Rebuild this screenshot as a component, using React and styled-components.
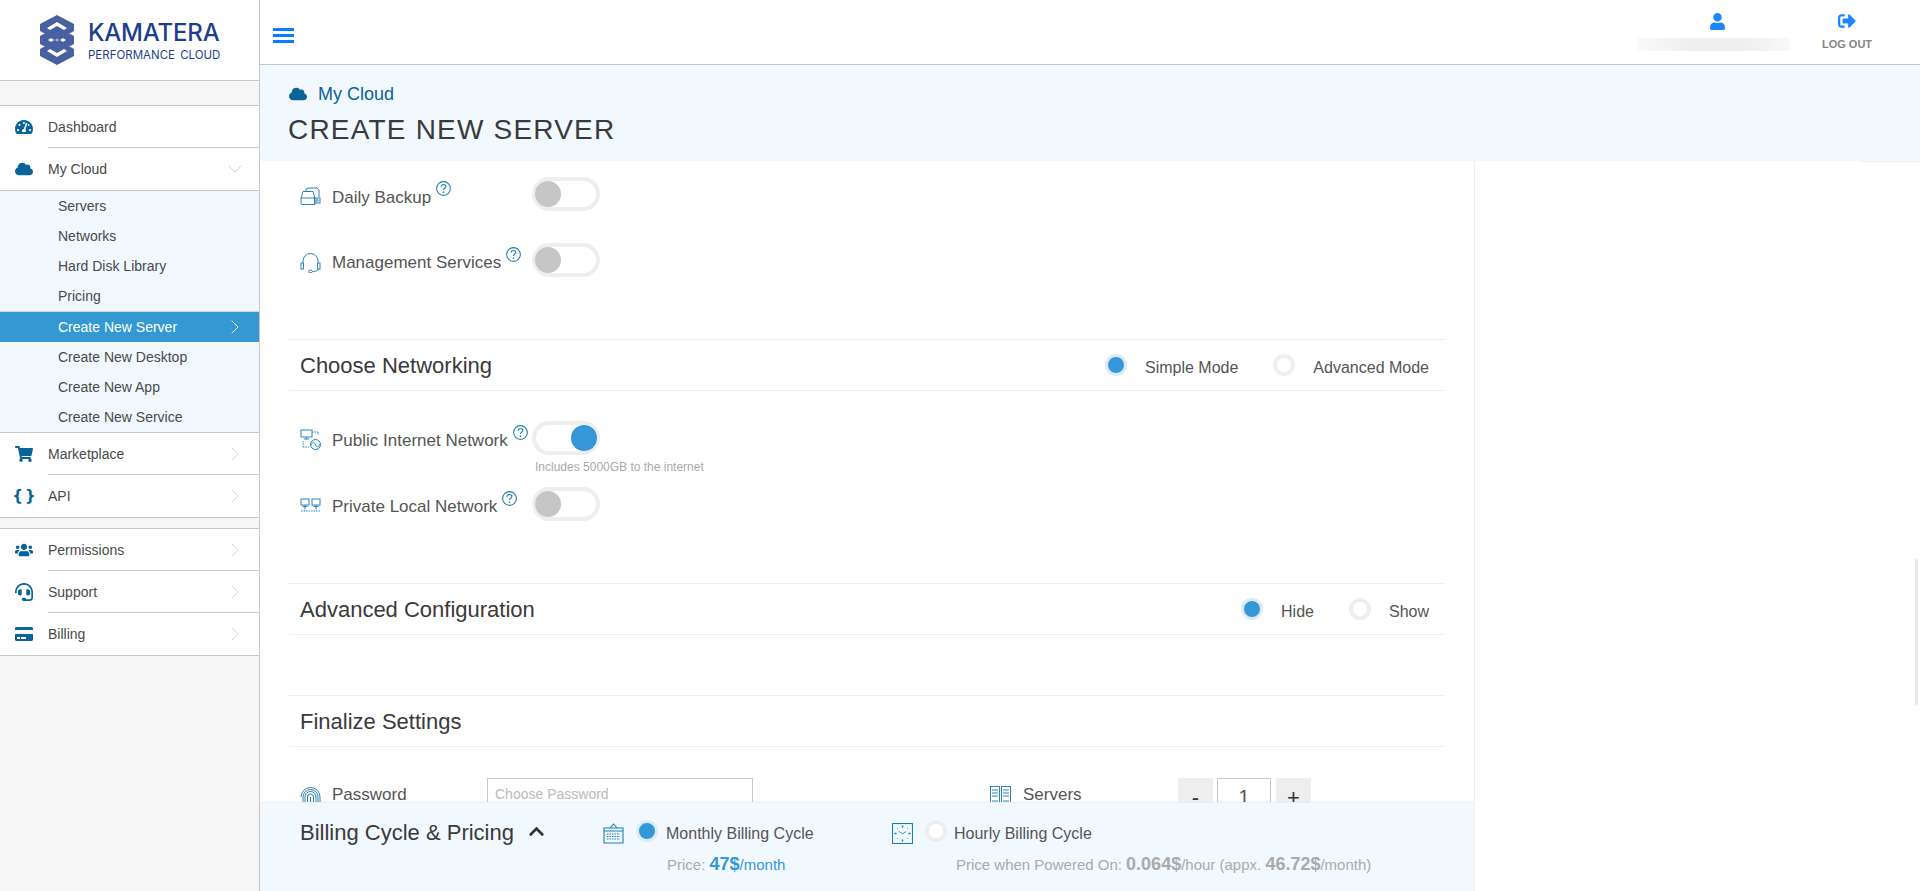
import React from "react";
import styled, { createGlobalStyle } from "styled-components";
import { FaTachometerAlt, FaCloud, FaShoppingCart, FaUsers, FaHeadset, FaCreditCard, FaUser, FaSignOutAlt, FaChevronUp } from "react-icons/fa";
import { FiChevronRight, FiChevronDown } from "react-icons/fi";

const Global = createGlobalStyle`
  html, body { margin: 0; height: 100%; overflow: hidden; }
  body { font-family: "Liberation Sans", Arial, sans-serif; color: #333; background: #fff; }
  * { box-sizing: border-box; }
`;

const Page = styled.div`
  position: relative;
  display: grid;
  grid-template-columns: 260px 1fr;
  height: 891px;
  overflow: hidden;
`;

const Sidebar = styled.aside`
  background: #f6f6f6;
  border-right: 1px solid #c8c8c8;
  height: 100%;
`;
const LogoBox = styled.div`
  height: 81px;
  background: #fff;
  border-bottom: 1px solid #c8c8c8;
  padding: 15px 0 0 40px;
  display: flex;
  gap: 14px;
`;
const LogoText = styled.div`
  color: #1d3f8f;
  font-family: "Inter", "Liberation Sans", sans-serif;
  display: flex;
  flex-direction: column;
  width: 134px;
`;
const LogoName = styled.div`
  font-size: 24px;
  font-weight: 500;
  line-height: 26px;
  margin-top: 5px;
  letter-spacing: -0.2px;
  white-space: nowrap;
`;
const LogoSub = styled.div`
  font-size: 11.5px;
  line-height: 13px;
  margin-top: 3px;
  letter-spacing: 0;
  word-spacing: 2px;
  white-space: nowrap;
  font-weight: 400;
`;
const Strip = styled.div`
  height: ${(p) => p.$h}px;
  border-bottom: 1px solid #c8c8c8;
`;
const NavGroup = styled.nav`
  background: #fff;
`;
const NavItem = styled.div`
  position: relative;
  display: flex;
  align-items: center;
  height: ${(p) => p.$h || 42}px;
  padding: 0 0 ${(p) => (p.$h ? 2 : 0)}px 15px;
  font-size: 14px;
  color: #4a4a4a;
  &::after {
    content: "";
    position: absolute;
    bottom: 0;
    right: 0;
    left: ${(p) => (p.$full ? 0 : 48)}px;
    height: 1px;
    background: #c8c8c8;
  }
`;
const NavIcon = styled.span`
  width: 18px;
  margin-right: 15px;
  color: #0a6399;
  display: flex;
  justify-content: center;
  align-items: center;
  font-size: 18px;
`;
const Braces = styled(NavIcon)`
  font-family: "DejaVu Sans", sans-serif;
  font-weight: 700;
  font-size: 15px;
  word-spacing: -3px;
  white-space: nowrap;
`;
const Caret = styled.span`
  margin-left: auto;
  margin-right: 12px;
  color: ${(p) => (p.$light ? "#fff" : "#c9c9c9")};
  display: flex;
  font-size: 24px;
  svg { stroke-width: ${(p) => (p.$light ? 1 : 0.8)}; }
`;
const Sub = styled.div`
  background: #f0f8fe;
  border-bottom: 1px solid #c8c8c8;
  height: 242px;
`;
const SubItem = styled.div`
  display: flex;
  align-items: center;
  height: ${(p) => (p.$active ? 31 : 30)}px;
  padding-left: 58px;
  font-size: 14px;
  color: ${(p) => (p.$active ? "#fff" : "#4a4a4a")};
  background: ${(p) => (p.$active ? "#3498d3" : "transparent")};
  border-top: ${(p) => (p.$active ? "1px solid #c8dbe6" : "0")};
`;

const Main = styled.main`
  position: relative;
  min-width: 0;
  display: flex;
  flex-direction: column;
  height: 891px;
`;
const Header = styled.header`
  height: 65px;
  flex: none;
  border-bottom: 1px solid #c8c8c8;
  display: flex;
  align-items: flex-start;
  padding: 0 43px 0 13px;
`;
const Burger = styled.div`
  margin-top: 28px;
  width: 21px;
  height: 15px;
  display: flex;
  flex-direction: column;
  justify-content: space-between;
  span { height: 3px; background: #0a7cff; display: block; }
`;
const UserBox = styled.div`
  margin-left: auto;
  width: 153px;
  display: flex;
  flex-direction: column;
  align-items: center;
  padding-top: 13px;
  color: #1b87ff;
  font-size: 17px;
  svg { margin-left: 8px; }
`;
const Blurred = styled.div`
  width: 153px;
  height: 13px;
  margin-top: 8px;
  background: linear-gradient(90deg, #fafafa, #efefef 35%, #efefef 70%, #f9f9f9);
`;
const LogoutBox = styled.div`
  width: 60px;
  margin-left: 27px;
  display: flex;
  flex-direction: column;
  align-items: center;
  padding-top: 12px;
  color: #1b87ff;
  font-size: 18px;
`;
const LogoutText = styled.div`
  margin-top: 8px;
  font-size: 11px;
  line-height: 13px;
  font-weight: 700;
  color: #858585;
  white-space: nowrap;
`;
const TitleBand = styled.div`
  height: 96px;
  flex: none;
  background: #f1f8fe;
  padding: 18px 0 0 28px;
`;
const Crumb = styled.div`
  display: flex;
  align-items: center;
  color: #0a6399;
  font-size: 18px;
  line-height: 22px;
  gap: 11px;
  padding-left: 1px;
`;
const PageTitle = styled.h1`
  margin: 9px 0 0;
  font-size: 28px;
  line-height: 32px;
  font-weight: 400;
  letter-spacing: 1.2px;
  color: #3a3a3a;
`;
const Body = styled.div`
  flex: 1;
  min-height: 0;
  width: 1215px;
  border-right: 1px solid #eee;
  overflow: hidden;
  padding: 16px 30px 0 29px;
`;
const Row = styled.div`
  display: flex;
  align-items: flex-start;
  height: 34px;
  padding-left: 11px;
  margin-bottom: ${(p) => p.$mb || 0}px;
`;
const LabelArea = styled.div`
  width: 232px;
  height: 34px;
  display: flex;
  align-items: center;
`;
const LineIcon = styled.svg`
  width: 21px;
  height: 21px;
  flex: none;
  margin-right: ${(p) => p.$mr || 11}px;
  fill: none;
  stroke: #2a82b5;
  stroke-width: 1;
  margin-top: ${(p) => p.$mt || 5}px;
`;
const RowLabel = styled.span`
  font-size: 17px;
  color: #555;
  margin-top: ${(p) => p.$mt || 5}px;
  white-space: nowrap;
`;
const Help = styled.svg`
  width: 15px;
  height: 15px;
  flex: none;
  margin: -12px 0 0 5px;
`;
const Toggle = styled.div`
  width: 68px;
  height: 34px;
  border: 4px solid #eee;
  border-radius: 17px;
  background: #fff;
  flex: none;
  display: flex;
  align-items: center;
  justify-content: ${(p) => (p.$on ? "flex-end" : "flex-start")};
  &::before {
    content: "";
    width: 26px;
    height: 26px;
    margin: 0 -1px;
    border-radius: 50%;
    background: ${(p) => (p.$on ? "#3498d8" : "#c6c6c6")};
  }
`;
const Hint = styled.div`
  height: 32px;
  padding: 5px 0 0 246px;
  font-size: 12px;
  line-height: 14px;
  color: #aaa;
`;
const SectionHead = styled.div`
  display: flex;
  align-items: center;
  height: 52px;
  border-top: 1px solid #eee;
  border-bottom: 1px solid #eee;
  padding: 0 15px 0 11px;
  margin-top: ${(p) => p.$mt || 0}px;
  margin-bottom: ${(p) => p.$mb || 0}px;
`;
const SectionTitle = styled.h2`
  margin: 2px 0 0;
  font-size: 22px;
  font-weight: 400;
  color: #3a3a3a;
  white-space: nowrap;
`;
const Radios = styled.div`
  margin-left: auto;
  display: flex;
  align-items: center;
  gap: 35px;
`;
const RadioOption = styled.label`
  display: flex;
  align-items: center;
  gap: 18px;
  font-size: 16px;
  color: #555;
  span { margin-top: 6px; }
`;
const Radio = styled.i`
  display: block;
  flex: none;
  width: 22px;
  height: 22px;
  border-radius: 50%;
  border: ${(p) => (p.$on ? "3px solid #dbeaf3" : "4px solid #eee")};
  background: ${(p) => (p.$on ? "#3498d8" : "#fff")};
`;
const FormRow = styled.div`
  display: grid;
  grid-template-columns: 690px 1fr;
  padding: 1px 0 0 11px;
`;
const FormCell = styled.div`
  display: flex;
  align-items: flex-start;
`;
const FormLabel = styled.span`
  font-size: 17px;
  color: #555;
  width: 155px;
  margin-top: 7px;
`;
const PassInput = styled.div`
  width: 266px;
  height: 40px;
  border: 1px solid #c8c8c8;
  padding: 7px 7px;
  font-size: 14px;
  color: #bbb;
`;
const Step = styled.div`
  width: 35px;
  height: 40px;
  background: #eee;
  text-align: center;
  font-size: 22px;
  line-height: 40px;
  color: #333;
`;
const StepValue = styled.div`
  width: 54px;
  height: 40px;
  margin: 0 5px 0 4px;
  border: 1px solid #c8c8c8;
  text-align: center;
  font-size: 20px;
  line-height: 36px;
  color: #555;
`;
const Billing = styled.footer`
  position: absolute;
  left: 0;
  bottom: 0;
  width: 1214px;
  height: 89px;
  background: #f1f8fe;
  border-top: 1px solid #e8eef2;
  display: flex;
  padding-left: 40px;
`;
const BillingTitle = styled.div`
  width: 303px;
  display: flex;
  align-items: center;
  gap: 14px;
  height: 60px;
  font-size: 22px;
  color: #3a3a3a;
  svg { font-size: 17px; color: #333; margin-top: -4px; }
`;
const Cycle = styled.div`
  width: ${(p) => p.$w}px;
  flex: none;
  padding-top: 17px;
`;
const CycleTop = styled.div`
  display: flex;
  align-items: flex-start;
  font-size: 16px;
  color: #555;
`;
const CycleIcon = styled.svg`
  width: 21px;
  height: 21px;
  margin: 3px 12px 0 0;
  flex: none;
  fill: none;
  stroke: #1e7fb5;
  stroke-width: 1.1;
`;
const CycleLabel = styled.span`
  margin: 5px 0 0 ${(p) => p.$ml}px;
  white-space: nowrap;
`;
const PriceLine = styled.div`
  margin: 10px 0 0 ${(p) => p.$ml}px;
  font-size: 15px;
  line-height: 20px;
  color: ${(p) => (p.$muted ? "#aaa" : "#3498d8")};
  white-space: nowrap;
  b { font-size: 18px; }
`;
const Muted = styled.span` color: #aaa; `;
const ScrollThumb = styled.div`
  position: absolute;
  right: 2px;
  top: 559px;
  width: 3px;
  height: 146px;
  background: #e8e8e8;
  border-radius: 2px;
`;
const CornerLine = styled.div`
  position: absolute;
  right: 0;
  top: 161px;
  width: 60px;
  height: 1px;
  background: #eee;
`;

const LogoMark = () => (
  <svg width="34" height="50" viewBox="0 0 34 50">
    <g fill="#1f3f8c" opacity=".82">
      <path d="M17 0 34 9v7L17 25 0 16V9z" />
      <path d="M17 12 34 21v8L17 38 0 29v-8z" />
      <path d="M17 25 34 34v7L17 50 0 41v-7z" />
    </g>
    <path fill="#fff" d="M17 7l10 6-3 2-7-4-7 4-3-2zM7 36l3-2 7 4 7-4 3 2-10 6zM8 25l3-2 3 2-3 2zM20 25l3-2 3 2-3 2z" />
    <path fill="#fff" opacity=".5" d="M14.500 25l2.500-1.500 2.500 1.500-2.500 1.500z" />
  </svg>
);
const HelpIcon = () => (
  <Help viewBox="0 0 14 14">
    <circle cx="7" cy="7" r="6.400" fill="none" stroke="#1e7fb0" strokeWidth="1" />
    <path d="M4.800 5.400c0-1.400 1.100-2.200 2.200-2.200s2.200.8 2.200 2c0 1.600-2.200 1.600-2.200 3.300" fill="none" stroke="#1e7fb0" strokeWidth="1" />
    <circle cx="7" cy="10.400" r=".75" fill="#1e7fb0" />
  </Help>
);
const DiskIcon = () => (
  <LineIcon viewBox="0 0 21 21">
    <path d="M1 12 3 5.500h10l2 6.500v6.500H2a1 1 0 0 1-1-1zM1 12h14" />
    <path d="M6 5.500V3l2-1h9l2 2v7" />
    <rect x="14.500" y="12" width="5.500" height="5" />
    <circle cx="17.200" cy="14.500" r="1" />
  </LineIcon>
);
const HeadsetIcon = () => (
  <LineIcon viewBox="0 0 21 21">
    <path d="M3 11V9a7.500 7.500 0 0 1 15 0v2M18.500 17c0 1.500-3 2.500-6 2.500" />
    <rect x="1" y="11" width="2.500" height="6" />
    <rect x="17.500" y="11" width="2.500" height="6" />
    <ellipse cx="10.500" cy="19.500" rx="2" ry="1.300" />
  </LineIcon>
);
const PublicNetIcon = () => (
  <LineIcon viewBox="0 0 21 21" $mt={3}>
    <rect x="1" y="1" width="11" height="7" />
    <path d="M4 10h5M6.500 8v2" />
    <path d="M12 3h6M18 3v3M3 12v6M3 18h6" strokeDasharray="1.500 1" />
    <circle cx="15.500" cy="15.500" r="5" />
    <path d="M11 16c2-4 3-3 4.500 0s3 2 4.500-1" />
  </LineIcon>
);
const LocalNetIcon = () => (
  <LineIcon viewBox="0 0 21 21" $mt={9}>
    <rect x="1" y="1" width="8" height="6" />
    <rect x="12" y="1" width="8" height="6" />
    <path d="M2.500 8.500h5M13.500 8.500h5M5 7v3M16 7v3" />
    <path d="M1 13h19M5 10v3M16 10v3" strokeDasharray="1.500 1" />
  </LineIcon>
);
const FingerprintIcon = () => (
  <LineIcon viewBox="0 0 21 21" $mt={8}>
    <path d="M1 11a9.500 9.500 0 0 1 19 0v5M3 17v-6a7.500 7.500 0 0 1 15 0v7M5 19v-8a5.500 5.500 0 0 1 11 0v9M7.500 20v-9a3 3 0 0 1 6 0v9M10.500 11v9" />
  </LineIcon>
);
const RackIcon = () => (
  <LineIcon viewBox="0 0 21 21" $mt={8} $mr={12}>
    <rect x=".5" y=".5" width="9" height="20" />
    <rect x="11.500" y=".5" width="9" height="20" />
    <path d="M2 4h6M2 7h6M2 10h6M13 4h6M13 7h6M13 10h6M2 15h6M13 15h6" />
  </LineIcon>
);
const CalendarIcon = () => (
  <CycleIcon viewBox="0 0 21 21">
    <path d="M1 5h19v15H1zM1 8h19M7 5l3.500-4L14 5" />
    <path d="M4 11h13M4 13.500h13M4 16h13" strokeDasharray="1.500 1" />
  </CycleIcon>
);
const ClockIcon = () => (
  <CycleIcon viewBox="0 0 21 21">
    <rect x=".5" y=".5" width="20" height="20" />
    <path d="M10.500 2.500v2M10.500 16.500v2M2.500 10.500h2M16.500 10.500h2" strokeWidth="1.500" />
    <path d="M5 5l.8.8M15.200 15.200l.8.800M16 5l-.8.8M5 16l.8-.8" strokeWidth=".8" />
    <path d="M6.500 8l4 3 3.500-2.500" strokeWidth=".8" />
  </CycleIcon>
);

const Item = ({ icon, label, full, h, open }) => (
  <NavItem $full={full} $h={h}>
    {icon}
    {label}
    <Caret>{open ? <FiChevronDown /> : <FiChevronRight />}</Caret>
  </NavItem>
);

export default function App() {
  return (
    <Page>
      <Global />
      <Sidebar>
        <LogoBox>
          <LogoMark />
          <LogoText>
            <LogoName>KAMATERA</LogoName>
            <LogoSub>PERFORMANCE CLOUD</LogoSub>
          </LogoText>
        </LogoBox>
        <Strip $h={25} />
        <NavGroup>
          <NavItem><NavIcon><FaTachometerAlt /></NavIcon>Dashboard</NavItem>
          <Item icon={<NavIcon><FaCloud /></NavIcon>} label="My Cloud" full h={43} open />
        </NavGroup>
        <Sub>
          <SubItem>Servers</SubItem>
          <SubItem>Networks</SubItem>
          <SubItem>Hard Disk Library</SubItem>
          <SubItem>Pricing</SubItem>
          <SubItem $active>
            Create New Server
            <Caret $light><FiChevronRight /></Caret>
          </SubItem>
          <SubItem>Create New Desktop</SubItem>
          <SubItem>Create New App</SubItem>
          <SubItem>Create New Service</SubItem>
        </Sub>
        <NavGroup>
          <Item icon={<NavIcon><FaShoppingCart /></NavIcon>} label="Marketplace" />
          <Item icon={<Braces>{"{ }"}</Braces>} label="API" full h={43} />
        </NavGroup>
        <Strip $h={11} />
        <NavGroup>
          <Item icon={<NavIcon><FaUsers /></NavIcon>} label="Permissions" />
          <Item icon={<NavIcon><FaHeadset /></NavIcon>} label="Support" />
          <Item icon={<NavIcon><FaCreditCard /></NavIcon>} label="Billing" full h={43} />
        </NavGroup>
      </Sidebar>
      <Main>
        <Header>
          <Burger><span /><span /><span /></Burger>
          <UserBox>
            <FaUser />
            <Blurred />
          </UserBox>
          <LogoutBox>
            <FaSignOutAlt />
            <LogoutText>LOG OUT</LogoutText>
          </LogoutBox>
        </Header>
        <TitleBand>
          <Crumb>
            <FaCloud size={18} />
            My Cloud
          </Crumb>
          <PageTitle>CREATE NEW SERVER</PageTitle>
        </TitleBand>
        <Body>
          <Row $mb={32}>
            <LabelArea><DiskIcon /><RowLabel $mt={7}>Daily Backup</RowLabel><HelpIcon /></LabelArea>
            <Toggle />
          </Row>
          <Row $mb={62}>
            <LabelArea><HeadsetIcon /><RowLabel>Management Services</RowLabel><HelpIcon /></LabelArea>
            <Toggle />
          </Row>
          <SectionHead $mb={30}>
            <SectionTitle>Choose Networking</SectionTitle>
            <Radios>
              <RadioOption><Radio $on /><span>Simple Mode</span></RadioOption>
              <RadioOption><Radio /><span>Advanced Mode</span></RadioOption>
            </Radios>
          </SectionHead>
          <Row>
            <LabelArea><PublicNetIcon /><RowLabel>Public Internet Network</RowLabel><HelpIcon /></LabelArea>
            <Toggle $on />
          </Row>
          <Hint>Includes 5000GB to the internet</Hint>
          <Row $mb={62}>
            <LabelArea><LocalNetIcon /><RowLabel>Private Local Network</RowLabel><HelpIcon /></LabelArea>
            <Toggle />
          </Row>
          <SectionHead>
            <SectionTitle>Advanced Configuration</SectionTitle>
            <Radios>
              <RadioOption><Radio $on /><span>Hide</span></RadioOption>
              <RadioOption><Radio /><span>Show</span></RadioOption>
            </Radios>
          </SectionHead>
          <SectionHead $mt={60} $mb={30}>
            <SectionTitle>Finalize Settings</SectionTitle>
          </SectionHead>
          <FormRow>
            <FormCell>
              <FingerprintIcon />
              <FormLabel>Password</FormLabel>
              <PassInput>Choose Password</PassInput>
            </FormCell>
            <FormCell>
              <RackIcon />
              <FormLabel>Servers</FormLabel>
              <Step>-</Step>
              <StepValue>1</StepValue>
              <Step>+</Step>
            </FormCell>
          </FormRow>
        </Body>
        <Billing>
          <BillingTitle>Billing Cycle &amp; Pricing <FaChevronUp /></BillingTitle>
          <Cycle $w={289}>
            <CycleTop>
              <CalendarIcon />
              <Radio $on />
              <CycleLabel $ml={8}>Monthly Billing Cycle</CycleLabel>
            </CycleTop>
            <PriceLine $ml={64}><Muted>Price: </Muted><b>47$</b>/month</PriceLine>
          </Cycle>
          <Cycle $w={500}>
            <CycleTop>
              <ClockIcon />
              <Radio />
              <CycleLabel $ml={7}>Hourly Billing Cycle</CycleLabel>
            </CycleTop>
            <PriceLine $ml={64} $muted>Price when Powered On: <b>0.064$</b>/hour (appx. <b>46.72$</b>/month)</PriceLine>
          </Cycle>
        </Billing>
      </Main>
      <CornerLine />
      <ScrollThumb />
    </Page>
  );
}
